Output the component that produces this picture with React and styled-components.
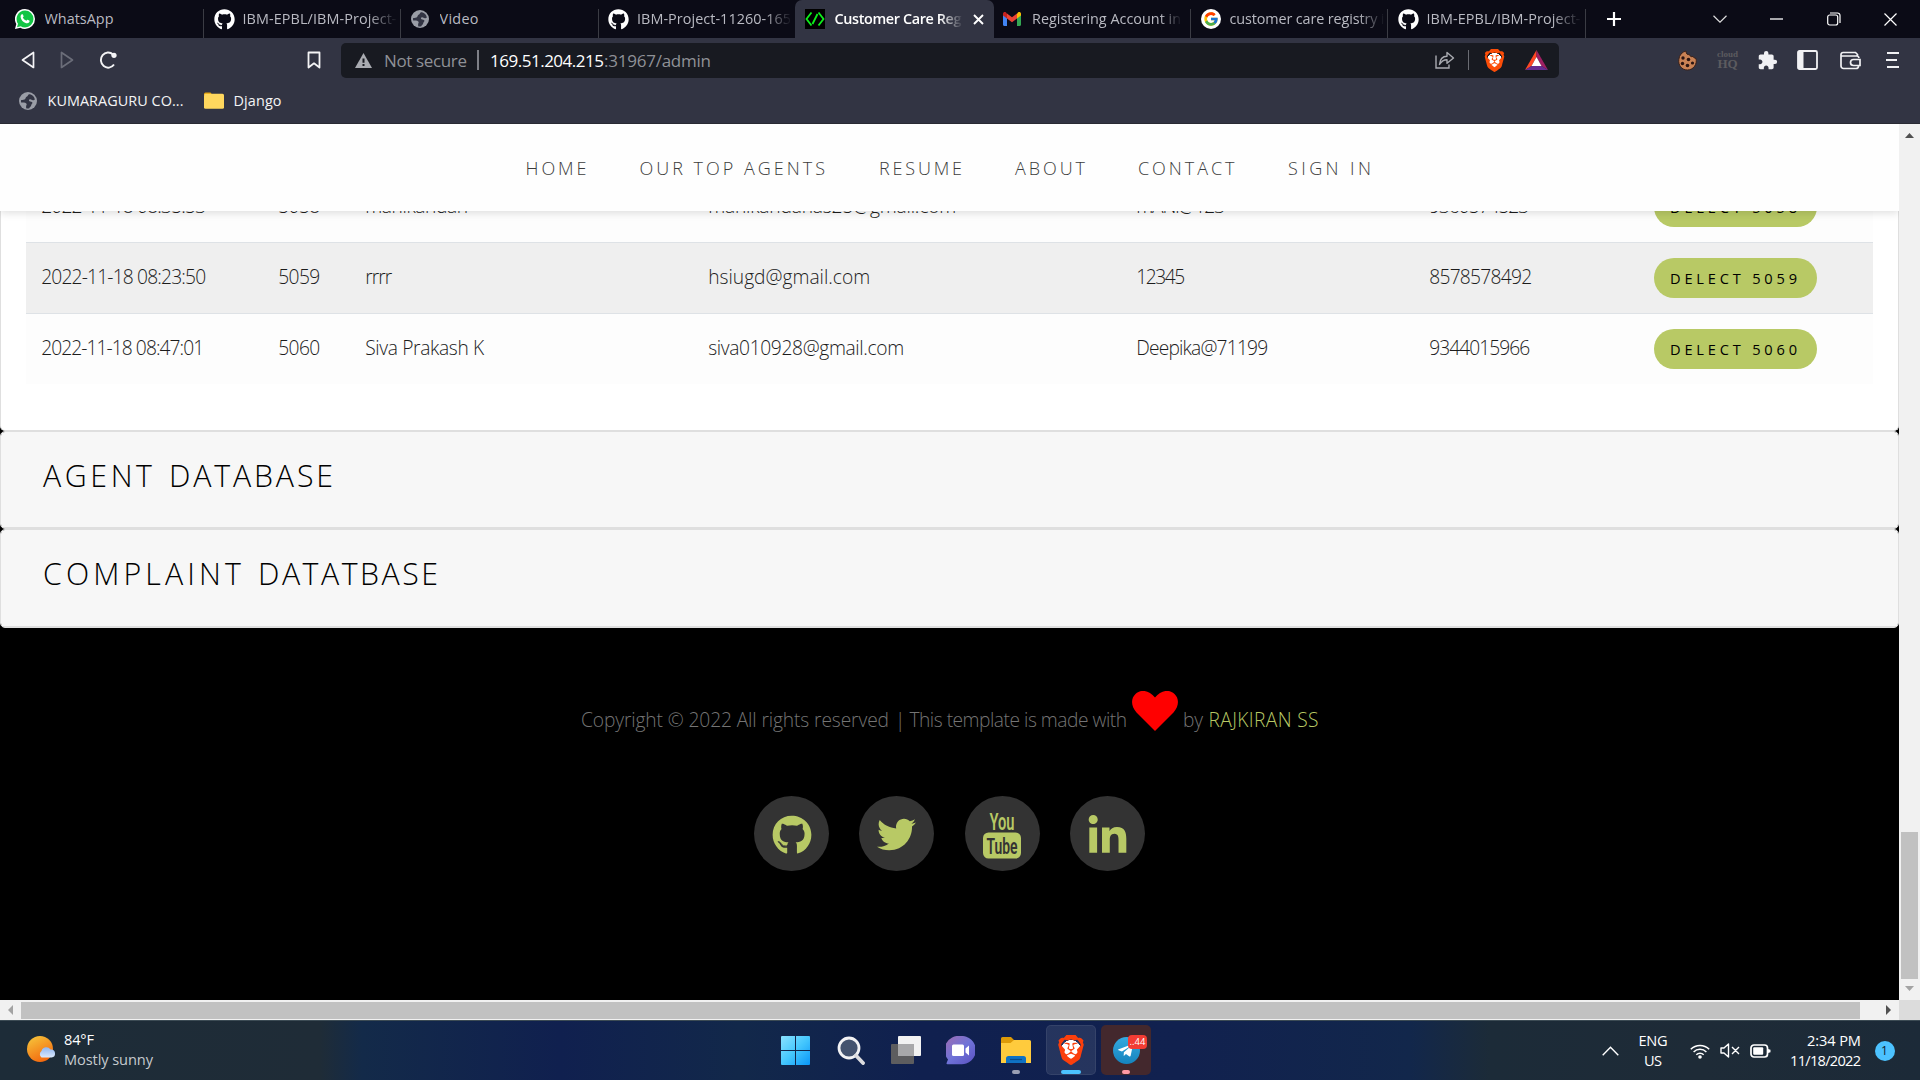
import React, { useLayoutEffect, useRef, useState } from "react";
import styled, { createGlobalStyle, css } from "styled-components";
import { FaGithub, FaTwitter, FaLinkedinIn, FaTelegramPlane } from "react-icons/fa";
import { MdExtension } from "react-icons/md";
import { SiBrave } from "react-icons/si";
import { FcGoogle } from "react-icons/fc";

const GlobalStyle = createGlobalStyle`
  *, *::before, *::after { box-sizing: border-box; }
  html, body { margin: 0; padding: 0; background: #000; }
  body { width: 1920px; height: 1080px; overflow: hidden; font-family: "Open Sans", "Noto Sans", sans-serif; }
  svg { display: block; flex: none; }
`;

/* ---------- text tracked to an exact width ---------- */
const FitBox = styled.span`
  display: block;
  flex: none;
  width: ${(p) => p.$w}px;
  white-space: nowrap;
  color: ${(p) => p.$color || "inherit"};
`;
function Fit({ w, color, children }) {
  const ref = useRef(null);
  const [spacing, setSpacing] = useState(0);
  useLayoutEffect(() => {
    const natural = ref.current.getBoundingClientRect().width;
    setSpacing((w - natural) / Math.max(1, children.length - 1));
  }, [w, children]);
  return (
    <FitBox $w={w} $color={color}>
      <span ref={ref} style={{ letterSpacing: spacing }}>{children}</span>
    </FitBox>
  );
}

const Screen = styled.div`
  width: 1920px;
  height: 1080px;
  display: grid;
  grid-template-rows: 38px 86px 896px 60px;
  overflow: hidden;
`;

/* ---------- tab strip ---------- */
const TabStrip = styled.div`
  display: flex;
  background: #0b0b16;
  padding-left: 5px;
`;
const Tab = styled.div`
  width: ${(p) => p.$width || 197.5}px;
  height: 38px;
  flex: none;
  display: flex;
  align-items: center;
  gap: ${(p) => p.$gap || 9}px;
  padding-left: 9.5px;
  font-size: 14.4px;
  color: #b9bac2;
  background: ${(p) => (p.$plain ? "none" : "linear-gradient(#3b3c44, #3b3c44) right bottom / 1px 29px no-repeat")};
  ${(p) => p.$active && css`
    background: #323443;
    border-radius: 7px 7px 0 0;
    color: #fff;
    font-weight: 600;
  `}
`;
const TabLabel = styled.div`
  width: ${(p) => p.$width || 155}px;
  overflow: hidden;
  flex: none;
  line-height: 22px;
  ${(p) => p.$fade && css`mask-image: linear-gradient(90deg, #000 ${p.$fade}px, transparent 100%);`}
`;
const GreenFavicon = styled.div`
  width: 20px;
  height: 20px;
  background: #000;
`;
const GoogleDisc = styled.div`
  width: 20px;
  height: 20px;
  border-radius: 50%;
  background: #fff;
  display: grid;
  place-items: center;
`;
const WindowControls = styled.div`
  display: flex;
  align-items: center;
  padding-left: 20.5px;
`;
const Control = styled.div`
  width: ${(p) => p.$width}px;
  display: flex;
  justify-content: flex-start;
`;

/* ---------- toolbar ---------- */
const Chrome = styled.div`
  background: #323443;
  display: grid;
  grid-template-rows: 45px 41px;
  border-bottom: 1px solid #292a33;
`;
const Toolbar = styled.div`
  display: grid;
  grid-template-columns: 341px 1218px 361px;
  align-items: center;
`;
const NavButtons = styled.div`
  display: flex;
  align-items: center;
  padding: 0 20px 1px 21px;
  gap: 25px;
  svg:last-child { margin-left: auto; }
`;
const AddressBar = styled.div`
  height: 35px;
  margin-bottom: 1px;
  border-radius: 5px;
  background: #181a21;
  display: flex;
  align-items: center;
  padding: 0 11px 0 14px;
  font-size: 17px;
  color: #8f9197;
`;
const WarnGap = styled.div`margin-right: 12px;`;
const BarLine = styled.div`
  width: ${(p) => p.$w || 2}px;
  height: 20px;
  background: ${(p) => p.$color || "#7e8087"};
  margin: 0 ${(p) => p.$right}px 0 ${(p) => p.$left}px;
`;
const AddressIcons = styled.div`
  margin-left: auto;
  display: flex;
  align-items: center;
`;
const LionPlate = styled.div`
  width: ${(p) => p.$size}px;
  height: ${(p) => p.$size}px;
  display: grid;
  place-items: center;
  color: ${(p) => p.$color};
  background: radial-gradient(ellipse at center, #fff 0 46%, transparent 47%);
`;
const BatGap = styled.div`margin-left: 19px;`;
const Extensions = styled.div`
  display: flex;
  align-items: center;
  justify-content: flex-end;
  padding: 0 21px 1px 0;
  color: #f1f1f4;
`;
const ExtSlot = styled.div`margin-left: ${(p) => p.$gap}px;`;
const CloudHq = styled.div`
  width: 21px;
  margin-left: 20px;
  padding-bottom: 1px;
  font-family: "Liberation Serif", serif;
  font-weight: 700;
  font-size: 9px;
  line-height: 8px;
  text-align: center;
  color: #5c5b5f;
  b { display: block; font-size: 13px; line-height: 11px; }
`;
const Bookmarks = styled.div`
  display: flex;
  align-items: center;
  padding: 0 0 6px 19px;
  font-size: 14.4px;
  color: #f4f4f6;
  svg:nth-of-type(2) { margin-left: 20px; }
`;
const BookmarkText = styled.div`
  margin-left: ${(p) => p.$gap}px;
  padding-bottom: 1px;
`;

/* ---------- page ---------- */
const PageFrame = styled.div`
  display: grid;
  grid-template-columns: 1899px 21px;
  grid-template-rows: 876px 20px;
`;
const Page = styled.div`
  background: #000;
  display: flex;
  flex-direction: column;
  overflow: hidden;
`;
const SiteHeader = styled.header`
  height: 87px;
  flex: none;
  position: relative;
  z-index: 2;
  background: #fefefe;
  box-shadow: 0 2px 8px rgba(0, 0, 0, 0.13);
  display: flex;
  align-items: center;
  padding: 1px 0 0 525.5px;
  font-size: 18px;
  font-weight: 300;
  color: #3c3c3c;
`;
const SiteNavItem = styled.div`margin-right: ${(p) => p.$gap}px;`;
const Scroller = styled.div`
  flex: 1;
  overflow: hidden;
`;
const Card = styled.section`
  background: #fff;
  border: 1px solid #dfdfdf;
  border-radius: 5px;
  overflow: hidden;
`;
const TableCard = styled(Card)`
  margin-top: -40px;
  border-top: 0;
  padding: 0 25px 46px;
  height: 260px;
`;
const Row = styled.div`
  height: 71px;
  border-top: 1px solid #dee2e6;
  background: ${(p) => (p.$striped ? "#efefef" : "#fdfdfd")};
  display: grid;
  grid-template-columns: 237px 87px 343px 428px 293px 224px 235px;
  align-items: center;
  color: #1c1c1c;
  font-size: 19.2px;
  font-weight: 300;
`;
const Cell = styled.div`
  padding: 0 0 3px 15.2px;
  line-height: 30px;
`;
const DeleteButton = styled.div`
  width: 163px;
  height: 40px;
  margin-left: 16px;
  border-radius: 20px;
  background: #b8c965;
  color: #000;
  font-size: 14.6px;
  font-weight: 400;
  display: flex;
  align-items: center;
  padding: 0 0 1px 16px;
`;
const Collapsed = styled(Card)`
  height: ${(p) => p.$h}px;
`;
const CollapsedHeader = styled.div`
  height: 100%;
  background: #f7f7f7;
  border-bottom: 1px solid #dfdfdf;
  padding: 22px 0 0 42px;
  display: flex;
  gap: 17px;
  font-size: 30.3px;
  line-height: 44px;
  font-weight: 300;
  color: #000;
`;
const Footer = styled.footer`
  padding-top: 61px;
  display: flex;
  flex-direction: column;
`;
const Copyright = styled.div`
  height: 44px;
  padding-left: 581px;
  display: flex;
  align-items: flex-start;
  font-size: 19.2px;
  font-weight: 300;
  color: #747474;
`;
const CopyText = styled.div`
  margin: 17px ${(p) => p.$gap || 0}px 0 0;
  line-height: 28px;
`;
const Heart = styled.svg`margin: 2px 5px 0 0;`;
const Socials = styled.div`
  padding: 63px 0 0 754px;
  display: flex;
  gap: 30.3px;
`;
const Social = styled.div`
  width: 75px;
  height: 75px;
  border-radius: 50%;
  background: #333;
  color: #b8c965;
  display: grid;
  place-items: center;
  padding-top: ${(p) => p.$drop || 0}px;
`;
const VTrack = styled.div`
  background: #f1f1f1;
  display: flex;
  flex-direction: column;
  align-items: center;
  padding: 9px 0 9px;
`;
const VThumb = styled.div`
  width: 17px;
  height: 147px;
  margin: 694px 0 7px;
  background: #c1c1c1;
`;
const HTrack = styled.div`
  background: #f1f1f1;
  display: flex;
  align-items: center;
  padding-left: 8px;
`;
const HThumb = styled.div`
  width: 1839px;
  height: 17px;
  margin: 0 26px 0 8px;
  background: #c1c1c1;
`;
const Corner = styled.div`background: #dcdcdc;`;

/* ---------- taskbar ---------- */
const Taskbar = styled.div`
  border-top: 1px solid #3c4b54;
  background: linear-gradient(90deg, #1d2c38 0, #1f2c37 320px, #132a49 362px, #10204f 560px, #12284a 740px, #10204f 920px, #11214f 1180px, #12274b 1410px, #1c2b38 1490px, #1e2b37 1700px, #1c2a38 1920px);
  display: grid;
  grid-template-columns: 771px 380px 1fr;
  color: #fff;
  font-size: 14.6px;
`;
const Weather = styled.div`
  display: flex;
  align-items: center;
  padding: 0 0 1px 26px;
  gap: 8px;
`;
const TwoLines = styled.div`
  display: flex;
  flex-direction: column;
  align-items: ${(p) => p.$align || "flex-start"};
  line-height: 20px;
  padding-bottom: 2px;
`;
const Apps = styled.div`
  display: flex;
  padding-top: 4px;
  gap: 5px;
`;
const TaskItem = styled.div`
  width: 50px;
  height: 50px;
  flex: none;
  border-radius: 5px;
  position: relative;
  display: grid;
  place-items: center;
  background: ${(p) => p.$bg || "transparent"};
  box-shadow: ${(p) => (p.$rim ? "inset 0 0 0 1px rgba(255,255,255,.07)" : "none")};
`;
const StartItem = styled(TaskItem)`padding-right: 1px;`;
const Underline = styled.div`
  position: absolute;
  bottom: 1px;
  left: 50%;
  transform: translateX(-50%);
  width: ${(p) => p.$w}px;
  height: 4px;
  border-radius: 2px;
  background: ${(p) => p.$color};
`;
const Unread = styled.div`
  position: absolute;
  top: 10px;
  left: 27px;
  width: 19px;
  height: 14px;
  border-radius: 4px;
  background: #f23c34;
  font-size: 9.5px;
  line-height: 14px;
  text-align: center;
`;
const TelegramDisc = styled.div`
  width: 27px;
  height: 27px;
  border-radius: 50%;
  background: linear-gradient(#35aae0, #1583bd);
  display: grid;
  place-items: center;
  padding-right: 2px;
`;
const Tray = styled.div`
  display: flex;
  align-items: center;
  padding-left: 450.5px;
`;
const TraySlot = styled.div`margin-left: ${(p) => p.$gap}px;`;
const Notice = styled.div`
  width: 20px;
  height: 20px;
  margin-left: 13.5px;
  border-radius: 50%;
  background: #4cc2ff;
  color: #10202c;
  font-size: 12px;
  line-height: 20px;
  text-align: center;
`;

const GithubMark = () => <FaGithub size={21} color="#fff" />;
const Globe = () => (
  <svg width="18" height="18" viewBox="0 0 18 18">
    <circle cx="9" cy="9" r="9" fill="#9a9da6" />
    <path d="M11 2.300C8.500 2.300 9.300 4 8 4.600 6.500 5.300 6.800 6.300 6.200 7 5.500 7.900 3.500 7.800 2.200 8.100 1.800 9 2 10 2.300 10.600c1.700.4 3.700-.2 5 .9 1 .9-.1 1.800-.2 2.700-.1.800 0 1.600.3 2.200 1 .2 2 .1 2.900-.2.2-1.300 1.800-1.600 1.900-3 .1-1.200 1.500-1.600 1.200-2.700-.3-1-2-.6-2.900-1.200C9.600 8.600 9.900 7.500 11 7.300c1.200-.2 1.700 1.100 3 1 .9-.1 1.300-.6 1.900-.9C15.300 4.800 13.400 2.900 11 2.300z" fill="#323443" />
  </svg>
);
const Gmail = () => (
  <svg width="18" height="14" viewBox="0 0 18 14">
    <path d="M0 2v10.800c0 .7.5 1.200 1.200 1.200H4V6z" fill="#4285f4" />
    <path d="M18 2v10.800c0 .7-.5 1.200-1.200 1.200H14V6z" fill="#34a853" />
    <path d="M14 1.500V6.500l4-3V2c0-2-2-2.500-3-1.500z" fill="#fbbc04" />
    <path d="M4 6.500V1.500l5 3.800 5-3.800v5L9 10.300z" fill="#ea4335" />
    <path d="M0 2v1.500l4 3v-5L3 .5C2-.5 0 0 0 2z" fill="#c5221f" />
  </svg>
);
const WhatsAppMark = () => (
  <svg width="20" height="20" viewBox="0 0 20 20">
    <path d="M10 0a10 10 0 0 1 0 20c-1.700 0-3.300-.4-4.700-1.200L0 20l1.300-5A10 10 0 0 1 10 0z" fill="#fff" />
    <path d="M10 1.500a8.500 8.500 0 0 1 0 17c-1.600 0-3-.4-4.300-1.200L2 18.200l1-3.500A8.500 8.500 0 0 1 10 1.500z" fill="#12c544" />
    <path d="M6.700 5.300c.5-.3 1-.2 1.200.3l.7 1.600c.1.400-.6 1.100-.8 1.400.8 1.500 1.900 2.500 3.500 3.200.4-.5.900-1.200 1.200-1.100l1.800.9c.5.3.2 1.500-.3 2-1.500 1.400-4 .5-6-1.200C6 10.700 4.500 7 6.700 5.300z" fill="#fff" />
  </svg>
);

const rows = [
  ["2022-11-18 08:35:53", 165, "5058", "manikandan", 103, "manikandanas25@gmail.com", 248, "mANi@123", 89, "9360574523", 100],
  ["2022-11-18 08:23:50", 165, "5059", "rrrr", 27, "hsiugd@gmail.com", 162, "12345", 49, "8578578492", 103],
  ["2022-11-18 08:47:01", 163, "5060", "Siva Prakash K", 119, "siva010928@gmail.com", 196, "Deepika@71199", 132, "9344015966", 101],
];

export default function App() {
  return (
    <Screen>
      <GlobalStyle />
      <TabStrip>
        <Tab $width={199} $gap={10}>
          <WhatsAppMark />
          <TabLabel><Fit w={69}>WhatsApp</Fit></TabLabel>
        </Tab>
        <Tab $width={197} $gap={8}>
          <GithubMark />
          <TabLabel $fade={125}><Fit w={154}>IBM-EPBL/IBM-Project-</Fit></TabLabel>
        </Tab>
        <Tab $width={197.5} $gap={11}>
          <Globe />
          <TabLabel $width={140}><Fit w={39}>Video</Fit></TabLabel>
        </Tab>
        <Tab $plain $width={196.5} $gap={8}>
          <GithubMark />
          <TabLabel $fade={128}><Fit w={154}>IBM-Project-11260-165</Fit></TabLabel>
        </Tab>
        <Tab $active $width={198.5} $gap={10}>
          <GreenFavicon>
            <svg width="20" height="20" viewBox="0 0 20 20" fill="none" stroke="#0df01b" strokeWidth="1.8">
              <path d="M6.500 3.500L1.500 10l5 6.500M13.500 3.500l5 6.500-5 6.500M12.500 5L7.500 15" />
            </svg>
          </GreenFavicon>
          <TabLabel $width={128} $fade={105}><Fit w={127}>Customer Care Reg</Fit></TabLabel>
          <svg width="11" height="11" viewBox="0 0 11 11" stroke="#fff" strokeWidth="1.900"><path d="M1 1l9 9M10 1l-9 9" /></svg>
        </Tab>
        <Tab $gap={11}>
          <Gmail />
          <TabLabel $width={150} $fade={128}><Fit w={149}>Registering Account in</Fit></TabLabel>
        </Tab>
        <Tab $width={197}>
          <GoogleDisc><FcGoogle size={16} /></GoogleDisc>
          <TabLabel $fade={128}><Fit w={155}>customer care registry i</Fit></TabLabel>
        </Tab>
        <Tab $gap={8}>
          <GithubMark />
          <TabLabel $fade={125}><Fit w={154}>IBM-EPBL/IBM-Project-</Fit></TabLabel>
        </Tab>
        <WindowControls>
          <Control $width={107}><svg width="16" height="16" viewBox="0 0 16 16" stroke="#fff" strokeWidth="2.200"><path d="M8 1v14M1 8h14" /></svg></Control>
          <Control $width={57}><svg width="14" height="8" viewBox="0 0 14 8" fill="none" stroke="#ddd" strokeWidth="1.200"><path d="M.5 .8l6.500 6.400L13.500 .8" /></svg></Control>
          <Control $width={57}><svg width="13" height="2" viewBox="0 0 13 2" stroke="#fff" strokeWidth="1.300"><path d="M0 1h13" /></svg></Control>
          <Control $width={57}><svg width="14" height="14" viewBox="0 0 14 14" fill="none" stroke="#fff" strokeWidth="1.200"><rect x=".7" y="3" width="10" height="10" rx="2" /><path d="M3 1h7.500a2.500 2.500 0 0 1 2.500 2.500V11" /></svg></Control>
          <Control $width={14}><svg width="13" height="13" viewBox="0 0 13 13" stroke="#fff" strokeWidth="1.200"><path d="M.5 .5l12 12M12.500 .5l-12 12" /></svg></Control>
        </WindowControls>
      </TabStrip>

      <Chrome>
        <Toolbar>
          <NavButtons>
            <svg width="14" height="18" viewBox="0 0 14 18" fill="none" stroke="#f4f4f6" strokeWidth="1.700" strokeLinejoin="round"><path d="M12.500 1.500v15L1.500 9z" /></svg>
            <svg width="14" height="18" viewBox="0 0 14 18" fill="none" stroke="#6b6d79" strokeWidth="1.700" strokeLinejoin="round"><path d="M1.500 1.500v15l11-7.500z" /></svg>
            <svg width="19" height="18" viewBox="0 0 19 18" fill="none" stroke="#f4f4f6" strokeWidth="1.900"><path d="M15 13.500A7.200 7.600 0 1 1 14 3.500" /><circle cx="15" cy="4.300" r="2.600" fill="#f4f4f6" stroke="none" /></svg>
            <svg width="14" height="18" viewBox="0 0 14 18" fill="none" stroke="#f4f4f6" strokeWidth="1.800" strokeLinejoin="round"><path d="M1.500 1.500h11v15L7 12.300 1.500 16.500z" /></svg>
          </NavButtons>
          <AddressBar>
            <WarnGap><svg width="17" height="15" viewBox="0 0 17 15"><path d="M8.500 0L17 15H0z" fill="#a9abb1" /><path d="M8.500 5.500v4.200M8.500 11v2" stroke="#181a21" strokeWidth="2" /></svg></WarnGap>
            <Fit w={83}>Not secure</Fit>
            <BarLine $left={10} $right={11} />
            <Fit w={114} color="#fff">169.51.204.215</Fit>
            <Fit w={107}>:31967/admin</Fit>
            <AddressIcons>
              <svg width="20" height="18" viewBox="0 0 20 18" fill="none" stroke="#a9abb1" strokeWidth="1.400"><path d="M1 4.500V17h13v-3.500" /><path d="M4.500 13.500C5 8 8 5.300 12 5.300V1.500L18.500 7 12 12.300V8.700C8.500 8.700 6.300 10.500 4.500 13.500z" strokeLinejoin="round" /></svg>
              <BarLine $w={1.5} $left={13} $right={14} $color="#6a6c73" />
              <LionPlate $size={23} $color="#fb4d08"><SiBrave size={23} /></LionPlate>
              <BatGap>
                <svg width="23" height="20" viewBox="0 0 23 20">
                  <path d="M11.500 0L0 20l6.500-4 5-9z" fill="#ff4724" />
                  <path d="M11.500 0L23 20l-6.500-4-5-9z" fill="#9e1f63" />
                  <path d="M0 20h23l-6.500-4h-10z" fill="#662d91" />
                  <path d="M11.500 7l5 9h-10z" fill="#fff" />
                </svg>
              </BatGap>
            </AddressIcons>
          </AddressBar>
          <Extensions>
            <svg width="19" height="21" viewBox="0 0 19 21">
              <path d="M8 1c0 3 1.500 4 3.500 3.500C12 6.500 13 7 15 6.500c.3 1 1.500 1.500 3 2C19.500 14 15.500 20 9.500 20S0 15 .8 9.500C1.300 5 4 2 8 1z" fill="#c98255" stroke="#3a2019" strokeWidth="1" />
              <g fill="#2b1512"><circle cx="5" cy="8" r="1.700" /><circle cx="10.500" cy="9.500" r="1.800" /><circle cx="4.500" cy="13.500" r="1.700" /><circle cx="9.500" cy="15.500" r="1.800" /><circle cx="14.500" cy="13" r="1.600" /></g>
            </svg>
            <CloudHq>cloud<b>HQ</b></CloudHq>
            <ExtSlot $gap={19}><MdExtension size={21} /></ExtSlot>
            <ExtSlot $gap={19}><svg width="21" height="20" viewBox="0 0 21 20"><rect x="1" y="1" width="19" height="18" rx="1.500" fill="none" stroke="currentColor" strokeWidth="1.800" /><path d="M1 1h5.500v18H1z" fill="currentColor" /></svg></ExtSlot>
            <ExtSlot $gap={22}><svg width="21" height="19" viewBox="0 0 21 19" fill="none" stroke="currentColor" strokeWidth="1.700"><path d="M17.500 6V3.500L15.500 1.500H3A2 2 0 0 0 1 3.500V15a2.500 2.500 0 0 0 2.500 2.500H16a2.500 2.500 0 0 0 2.500-2.500M1.500 5h15a2.500 2.500 0 0 1 2.500 2" /><path d="M20 8.500h-6.500a3 3 0 0 0 0 6H20z" /></svg></ExtSlot>
            <ExtSlot $gap={25}><svg width="13" height="18" viewBox="0 0 13 18" stroke="currentColor" strokeWidth="1.800"><path d="M1 2h12M0 9h11M1 16h12" /></svg></ExtSlot>
          </Extensions>
        </Toolbar>
        <Bookmarks>
          <Globe />
          <BookmarkText $gap={10.5}><Fit w={136}>KUMARAGURU CO...</Fit></BookmarkText>
          <svg width="20" height="17" viewBox="0 0 20 17"><path d="M0 2a1.500 1.500 0 0 1 1.500-1.500h5L8.500 3H0z" fill="#e2a00c" /><rect y="1.800" width="20" height="15" rx="1.500" fill="#ffd75e" /></svg>
          <BookmarkText $gap={10}><Fit w={48}>Django</Fit></BookmarkText>
        </Bookmarks>
      </Chrome>

      <PageFrame>
        <Page>
          <SiteHeader>
            <SiteNavItem $gap={53}><Fit w={61}>HOME</Fit></SiteNavItem>
            <SiteNavItem $gap={54}><Fit w={185.5}>OUR TOP AGENTS</Fit></SiteNavItem>
            <SiteNavItem $gap={53}><Fit w={83}>RESUME</Fit></SiteNavItem>
            <SiteNavItem $gap={53}><Fit w={70}>ABOUT</Fit></SiteNavItem>
            <SiteNavItem $gap={53.5}><Fit w={96.5}>CONTACT</Fit></SiteNavItem>
            <SiteNavItem $gap={0}><Fit w={83}>SIGN IN</Fit></SiteNavItem>
          </SiteHeader>
          <Scroller>
            <TableCard>
              {rows.map((r, i) => (
                <Row key={r[2]} $striped={i === 1}>
                  <Cell><Fit w={r[1]}>{r[0]}</Fit></Cell>
                  <Cell><Fit w={42}>{r[2]}</Fit></Cell>
                  <Cell><Fit w={r[4]}>{r[3]}</Fit></Cell>
                  <Cell><Fit w={r[6]}>{r[5]}</Fit></Cell>
                  <Cell><Fit w={r[8]}>{r[7]}</Fit></Cell>
                  <Cell><Fit w={r[10]}>{r[9]}</Fit></Cell>
                  <DeleteButton><Fit w={127}>{"DELECT " + r[2]}</Fit></DeleteButton>
                </Row>
              ))}
            </TableCard>
            <Collapsed $h={98}><CollapsedHeader><Fit w={109}>AGENT</Fit><Fit w={164}>DATABASE</Fit></CollapsedHeader></Collapsed>
            <Collapsed $h={99}><CollapsedHeader><Fit w={198}>COMPLAINT</Fit><Fit w={180}>DATATBASE</Fit></CollapsedHeader></Collapsed>
            <Footer>
              <Copyright>
                <CopyText $gap={6}><Fit w={308}>Copyright © 2022 All rights reserved</Fit></CopyText>
                <CopyText $gap={5}><Fit w={232}>| This template is made with</Fit></CopyText>
                <Heart width="46" height="40" viewBox="0 0 46 40"><path d="M23 40L4.500 21.500C-1.500 15-1 7 3.500 3 9-2 17-1 23 6.500 29-1 37-2 42.500 3 47 7 47.500 15 41.500 21.500z" fill="#f00" /></Heart>
                <CopyText $gap={5.5}><Fit w={20}>by</Fit></CopyText>
                <CopyText><Fit w={110} color="#b8c965">RAJKIRAN SS</Fit></CopyText>
              </Copyright>
              <Socials>
                <Social $drop={2}><FaGithub size={40} /></Social>
                <Social $drop={2}><FaTwitter size={39} /></Social>
                <Social $drop={2}>
                  <svg width="40" height="48" viewBox="0 0 40 48" fontFamily="Roboto, sans-serif" fontWeight="600">
                    <text x="7.500" y="19" fontSize="24" fill="#b8c965" textLength="25" lengthAdjust="spacingAndGlyphs">You</text>
                    <rect x="1" y="21.500" width="38" height="26" rx="5.500" fill="#b8c965" />
                    <text x="4.500" y="42.500" fontSize="22" fill="#333" textLength="31" lengthAdjust="spacingAndGlyphs">Tube</text>
                  </svg>
                </Social>
                <Social $drop={6}><FaLinkedinIn size={43} /></Social>
              </Socials>
            </Footer>
          </Scroller>
        </Page>
        <VTrack>
          <svg width="9" height="5" viewBox="0 0 9 5"><path d="M4.500 0L9 5H0z" fill="#505050" /></svg>
          <VThumb />
          <svg width="9" height="5" viewBox="0 0 9 5"><path d="M0 0h9L4.500 5z" fill="#a3a3a3" /></svg>
        </VTrack>
        <HTrack>
          <svg width="5" height="10" viewBox="0 0 5 10"><path d="M5 0v10L0 5z" fill="#a3a3a3" /></svg>
          <HThumb />
          <svg width="5" height="10" viewBox="0 0 5 10"><path d="M0 0v10l5-5z" fill="#505050" /></svg>
        </HTrack>
        <Corner />
      </PageFrame>

      <Taskbar>
        <Weather>
          <svg width="30" height="28" viewBox="0 0 30 28">
            <defs>
              <linearGradient id="sun" x1="0.200" y1="0" x2="0.700" y2="1"><stop offset="0" stopColor="#f6c33a" /><stop offset="1" stopColor="#f3640c" /></linearGradient>
              <linearGradient id="cloud" x1="0" y1="0" x2="0" y2="1"><stop offset="0" stopColor="#8fb6f2" /><stop offset="1" stopColor="#dbe8fb" /></linearGradient>
            </defs>
            <circle cx="14" cy="13" r="13" fill="url(#sun)" />
            <path d="M15.500 21.500a4 4 0 0 1 0-6.500 5 5 0 0 1 9-1.500 4 4 0 0 1 1 8z" fill="url(#cloud)" />
          </svg>
          <TwoLines>
            <Fit w={30}>84°F</Fit>
            <Fit w={89} color="#c5cace">Mostly sunny</Fit>
          </TwoLines>
        </Weather>
        <Apps>
          <StartItem>
            <svg width="29" height="29" viewBox="0 0 29 29">
              <defs><linearGradient id="win" x1="0" y1="0" x2="1" y2="1"><stop offset="0" stopColor="#8ae2ff" /><stop offset="0.500" stopColor="#45c7fd" /><stop offset="1" stopColor="#0996f8" /></linearGradient></defs>
              <path d="M1 0h13v14H0V1a1 1 0 0 1 1-1zM15 0h13a1 1 0 0 1 1 1v13H15zM0 15h14v14H1a1 1 0 0 1-1-1zM15 15h14v13a1 1 0 0 1-1 1H15z" fill="url(#win)" />
            </svg>
          </StartItem>
          <TaskItem>
            <svg width="28" height="30" viewBox="0 0 28 30"><circle cx="12" cy="13" r="10" fill="#44536f" stroke="#f2f2f4" strokeWidth="2.800" /><path d="M19 20.500l7 7.500" stroke="#dcdcdf" strokeWidth="3.800" strokeLinecap="round" /></svg>
          </TaskItem>
          <TaskItem>
            <svg width="30" height="28" viewBox="0 0 30 28"><rect x="7" y="0" width="23" height="20" rx="1" fill="#f2f2f2" /><rect x="0" y="8" width="23" height="20" rx="1" fill="#5d5d5f" /><path d="M7 8h16v12H7z" fill="#a8a8aa" /></svg>
          </TaskItem>
          <StartItem>
            <svg width="29" height="29" viewBox="0 0 29 29">
              <defs><linearGradient id="chat" x1="0" y1="0" x2="1" y2="1"><stop offset="0" stopColor="#a06cb0" /><stop offset="0.500" stopColor="#6f73d8" /><stop offset="1" stopColor="#5a50c0" /></linearGradient></defs>
              <path d="M14.500 0a14.200 14.200 0 1 1 0 28.300H1.500c-1 0-1.200-.8-.8-1.500l1.300-3.300A14.200 14.200 0 0 1 14.500 0z" fill="url(#chat)" />
              <rect x="6" y="8.500" width="12" height="11.500" rx="1.500" fill="#fff" /><path d="M19.500 12.500l3.500-3v10l-3.500-3z" fill="#fff" />
            </svg>
          </StartItem>
          <TaskItem>
            <svg width="30" height="27" viewBox="0 0 30 27">
              <path d="M0 1.500A1.500 1.500 0 0 1 1.500 0H10l3 3v3H0z" fill="#dd9a08" />
              <path d="M0 6h9.500L13 3h15.500A1.500 1.500 0 0 1 30 4.500V26H0z" fill="#ffcb3d" />
              <path d="M5 26v-4.500a2.500 2.500 0 0 1 2.500-2.500h15a2.500 2.500 0 0 1 2.500 2.500V26z" fill="#0f72c4" /><path d="M9 22.500h12" stroke="#0a4c8a" strokeWidth="1.200" />
            </svg>
            <Underline $w={8} $color="#9a9fb3" />
          </TaskItem>
          <TaskItem $bg="rgba(255,255,255,0.09)" $rim>
            <LionPlate $size={30} $color="#fb3f0c"><SiBrave size={30} /></LionPlate>
            <Underline $w={20} $color="#4cc2ff" />
          </TaskItem>
          <TaskItem $bg="#43282d">
            <TelegramDisc><FaTelegramPlane size={17} color="#fff" /></TelegramDisc>
            <Unread>..44</Unread>
            <Underline $w={8} $color="#ff99a4" />
          </TaskItem>
        </Apps>
        <Tray>
          <svg width="17" height="10" viewBox="0 0 17 10" fill="none" stroke="#fff" strokeWidth="1.400"><path d="M.7 9.200L8.500 1.200l7.800 8" /></svg>
          <TraySlot $gap={20}>
            <TwoLines $align="center"><Fit w={29}>ENG</Fit><Fit w={18}>US</Fit></TwoLines>
          </TraySlot>
          <TraySlot $gap={22.5}>
            <svg width="20" height="16" viewBox="0 0 20 16" fill="none" stroke="#fff" strokeWidth="1.500"><path d="M.8 6.200a13 13 0 0 1 18.400 0M3.600 9a9 9 0 0 1 12.800 0M6.300 11.800a5.200 5.200 0 0 1 7.400 0" /><circle cx="10" cy="14" r="1.800" fill="#fff" stroke="none" /></svg>
          </TraySlot>
          <TraySlot $gap={10}>
            <svg width="20" height="15" viewBox="0 0 20 15" fill="none" stroke="#fff" strokeWidth="1.400"><path d="M1 5h3L8.500 1v13L4 10H1zM12 4l7 7M19 4l-7 7" strokeLinejoin="round" /></svg>
          </TraySlot>
          <TraySlot $gap={10}>
            <svg width="21" height="14" viewBox="0 0 21 14"><rect x="1" y="1" width="16.500" height="12" rx="3" fill="none" stroke="#fff" strokeWidth="1.700" /><rect x="3.200" y="3.200" width="10" height="7.600" rx="1" fill="#fff" /><path d="M18 5l2.500 .8v2.400L18 9z" fill="#fff" /></svg>
          </TraySlot>
          <TraySlot $gap={19}>
            <TwoLines $align="flex-end"><Fit w={54}>2:34 PM</Fit><Fit w={71}>11/18/2022</Fit></TwoLines>
          </TraySlot>
          <Notice>1</Notice>
        </Tray>
      </Taskbar>
    </Screen>
  );
}
